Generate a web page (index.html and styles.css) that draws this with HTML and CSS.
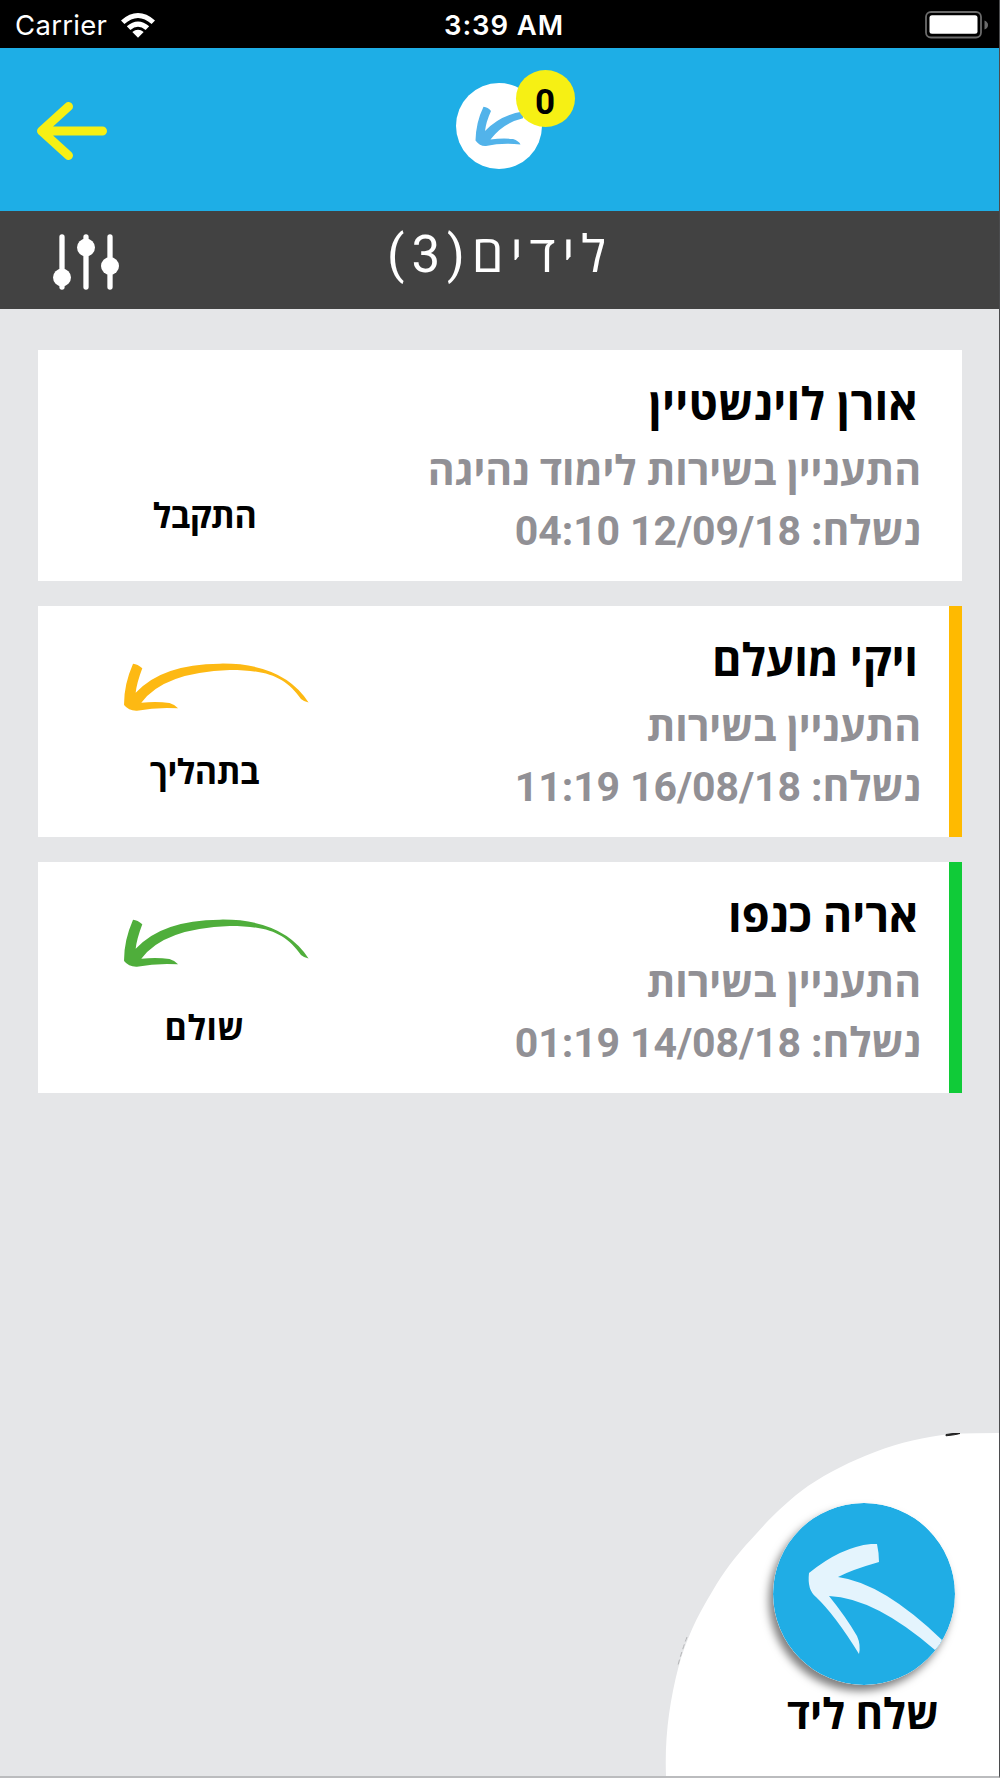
FILE: index.html
```html
<!DOCTYPE html>
<html lang="he">
<head>
<meta charset="utf-8">
<title>לידים</title>
<link rel="stylesheet" href="styles.css">
</head>
<body>
<svg class="defs" width="0" height="0">
  <symbol id="swoosh" viewBox="300 210 580 160">
    <path d="M338 221Q352 222 366 235Q349 280 346 309Q425 222 600 221Q790 218 868 338Q855 337 845 328C800 265 750 240 630 240Q430 247 363 339Q410 334 448 340Q465 345 474 356Q410 352 350 363Q325 364 311 346Q310 285 338 221Z"/>
  </symbol>
</svg>
<div class="screen">
  <header class="status">
    <div class="carrier">
      <span class="carrier-name">Carrier</span>
      <svg class="wifi" viewBox="0 0 34 25">
        <path d="M0 7.400Q17 -7.400 34 7.400L30.600 11Q17 -1 3.400 11Z M5.800 13.300Q17 3.700 28.200 13.300L24.600 17Q17 10.500 9.400 17Z M11.300 19Q17 14.500 22.700 19L17 24.700Z"/>
      </svg>
    </div>
    <span class="time">3:39 AM</span>
    <svg class="battery" viewBox="0 0 64 28">
      <rect class="battery-case" x="1" y="1" width="55" height="25.500" rx="5"/>
      <rect x="4.500" y="4.300" width="48" height="18.400" rx="2.500"/>
      <path class="battery-tip" d="M59.500 9.500Q63 11 63 14Q63 17 59.500 18.500Z"/>
    </svg>
  </header>

  <nav class="topbar">
    <svg class="back" viewBox="0 0 72 60"><path d="M32.500 5.500L5.500 30L32.500 54.500M6 30H66.500"/></svg>
    <div class="logo">
      <svg class="logo-mark" viewBox="456 83 86 86">
        <path d="M483.500 106.700Q488 107 491 111Q486 122 485 131Q500 115 523 111.500V118.300Q503 123 490.500 139.500Q502 138 513 139Q519 141 520.500 144.500Q502 142.500 486 146Q480 146.500 475.500 140.500Q476 122 483.500 106.700Z"/>
      </svg>
      <span class="badge">0</span>
    </div>
  </nav>

  <div class="titlebar">
    <svg class="filter" viewBox="0 0 68 58">
      <path d="M10 4V54M34 4V54M58 4V54"/>
      <circle cx="10" cy="44.500" r="9"/><circle cx="34" cy="14.500" r="9"/><circle cx="58" cy="33" r="9"/>
    </svg>
    <h1 class="title" dir="rtl">לידים(3)</h1>
  </div>

  <main class="list">
    <article class="card">
      <div class="state"><span class="state-label">התקבל</span></div>
      <div class="info" dir="rtl">
        <h2 class="name name-long">אורן לוינשטיין</h2>
        <p class="line">התעניין בשירות לימוד נהיגה</p>
        <p class="line">נשלח: <bdi>12/09/18</bdi> <bdi>04:10</bdi></p>
      </div>
    </article>
    <article class="card pending">
      <div class="state"><svg class="arrow"><use href="#swoosh"/></svg><span class="state-label">בתהליך</span></div>
      <div class="info" dir="rtl">
        <h2 class="name">ויקי מועלם</h2>
        <p class="line">התעניין בשירות</p>
        <p class="line">נשלח: <bdi>16/08/18</bdi> <bdi>11:19</bdi></p>
      </div>
    </article>
    <article class="card paid">
      <div class="state"><svg class="arrow"><use href="#swoosh"/></svg><span class="state-label state-short">שולם</span></div>
      <div class="info" dir="rtl">
        <h2 class="name">אריה כנפו</h2>
        <p class="line">התעניין בשירות</p>
        <p class="line">נשלח: <bdi>14/08/18</bdi> <bdi>01:19</bdi></p>
      </div>
    </article>
  </main>

  <div class="send">
    <svg class="send-shape" viewBox="0 0 334 343">
      <path class="send-bg" d="M1 343C-0.500 305 4.500 268 13.500 234C20.500 208 31.500 184 47.500 158C58.500 139 70.500 123 86.500 106C103 87 122 68 143 53C164 39 186 28 210 19C235 9 260 4 285 1Q300 0 334 0V343Z"/>
      <path class="send-mark" d="M281 1.500Q288 0 295 0.500Q290 2 281 2.800Z"/>
      <path class="send-edge" d="M22 204Q17 217 12.500 234"/>
    </svg>
    <div class="send-content">
      <svg class="send-button" viewBox="0 0 182 182">
        <circle cx="91" cy="91" r="91"/>
        <path d="M36 70Q68 44 98 41L104 41Q106 50 106 59Q78 67 65 74Q110 80 169 137Q167 142 162 147Q102 95 56 93Q73 114 84 133Q88 142 86 151Q62 112 43 94Q34 87 36 70Z"/>
      </svg>
      <span class="send-label" dir="rtl">שלח ליד</span>
    </div>
  </div>
</div>
</body>
</html>
```
FILE: styles.css
```css
* { box-sizing: border-box; }
body { margin: 0; background: #e5e6e8; font-family: Roboto, "Open Sans", sans-serif; }
h1, h2, p { margin: 0; }
.defs { position: absolute; }
.screen {
  position: relative;
  width: 1000px;
  height: 1778px;
  overflow: hidden;
  border-right: 1px solid #4b4c4e;
  border-bottom: 2px solid #bbbcbe;
}

.status {
  display: grid;
  grid-template-columns: 1fr auto 1fr;
  align-items: center;
  height: 48px;
  padding: 0 10px 0 15px;
  background: #000;
  color: #fff;
  fill: #fff;
  font-family: Inter, sans-serif;
  font-size: 27.500px;
  line-height: 50px;
}
.carrier { display: flex; align-items: center; gap: 13px; height: 48px; }
.carrier-name { width: 93px; white-space: nowrap; letter-spacing: 0.300px; }
.wifi { width: 34px; height: 25px; }
.time { padding-left: 4px; font-weight: 600; letter-spacing: 0.900px; }
.battery { width: 64px; height: 28px; justify-self: end; }
.battery-case { fill: none; stroke: #6b6b6b; stroke-width: 1.800; }
.battery-tip { fill: #6b6b6b; }

.topbar {
  display: grid;
  grid-template-columns: 1fr auto 1fr;
  height: 163px;
  padding: 0 36px 0 34px;
  background: #1eaee6;
}
.back { width: 72px; height: 60px; margin: 53px 0 0 2px; fill: none; stroke: #f6f014; stroke-width: 9; stroke-linecap: round; stroke-linejoin: round; }
.logo { position: relative; width: 86px; height: 86px; margin-top: 35px; border-radius: 50%; background: #fff; }
.logo-mark { display: block; width: 86px; height: 86px; fill: #52b3ea; }
.badge {
  position: absolute;
  left: 60px;
  top: -13px;
  width: 59px;
  height: 57px;
  border-radius: 50%;
  background: #f6f014;
  color: #000;
  font-size: 35px;
  font-weight: 700;
  line-height: 65px;
  text-align: center;
}

.titlebar {
  display: grid;
  grid-template-columns: 1fr auto 1fr;
  height: 98px;
  padding: 0 51px 0 52px;
  background: #424242;
  color: #fff;
}
.filter { width: 68px; height: 58px; margin-top: 22px; fill: #fff; stroke: #fff; stroke-width: 5.300; stroke-linecap: round; }
.filter circle { stroke: none; }
.title { font-size: 51px; font-weight: 400; line-height: 88px; letter-spacing: 6.900px; white-space: nowrap; }

.list { display: flex; flex-direction: column; gap: 25px; padding: 41px 37px 0 37.500px; }
.card { display: flex; height: 231px; background: #fff; border-right: 13px solid #fff; }
.pending { border-color: #ffba00; fill: #fdb913; }
.paid { border-color: #10cb38; fill: #4fae3b; }
.state { display: flex; flex-direction: column; justify-content: flex-end; width: 334px; padding-bottom: 42px; }
.arrow { width: 193px; height: 53px; margin: 0 0 36px 82.500px; }
.state-label { font-size: 34px; font-weight: 700; line-height: 46px; letter-spacing: -0.500px; text-align: center; }
.state-short { letter-spacing: 0.500px; }
.info { flex: 1; padding: 27px 28px 0 0; white-space: nowrap; }
.name { margin: 0 3px 8px 0; font-size: 45px; font-weight: 700; line-height: 56px; letter-spacing: -0.100px; }
.name-long { letter-spacing: 0.300px; }
.line { color: #919095; font-size: 41px; font-weight: 700; line-height: 60px; letter-spacing: -0.100px; }

.send { position: absolute; right: 0; bottom: 0; width: 334px; height: 343px; }
.send-shape { position: absolute; inset: 0; width: 334px; height: 343px; }
.send-bg { fill: #fff; }
.send-mark { fill: #222; stroke: #222; }
.send-edge { fill: none; stroke: #b5b6b8; stroke-width: 1; stroke-dasharray: 5 3; }
.send-content { position: relative; display: flex; flex-direction: column; align-items: center; width: 182px; margin: 70px 0 0 108px; }
.send-button { width: 182px; height: 182px; border-radius: 50%; fill: #e4f4fd; box-shadow: -4px 6px 8px rgba(0, 0, 0, .5); }
.send-button circle { fill: #20ade5; }
.send-label { margin: 5px 2px 0 0; font-size: 42px; font-weight: 700; line-height: 50px; white-space: nowrap; }
```
